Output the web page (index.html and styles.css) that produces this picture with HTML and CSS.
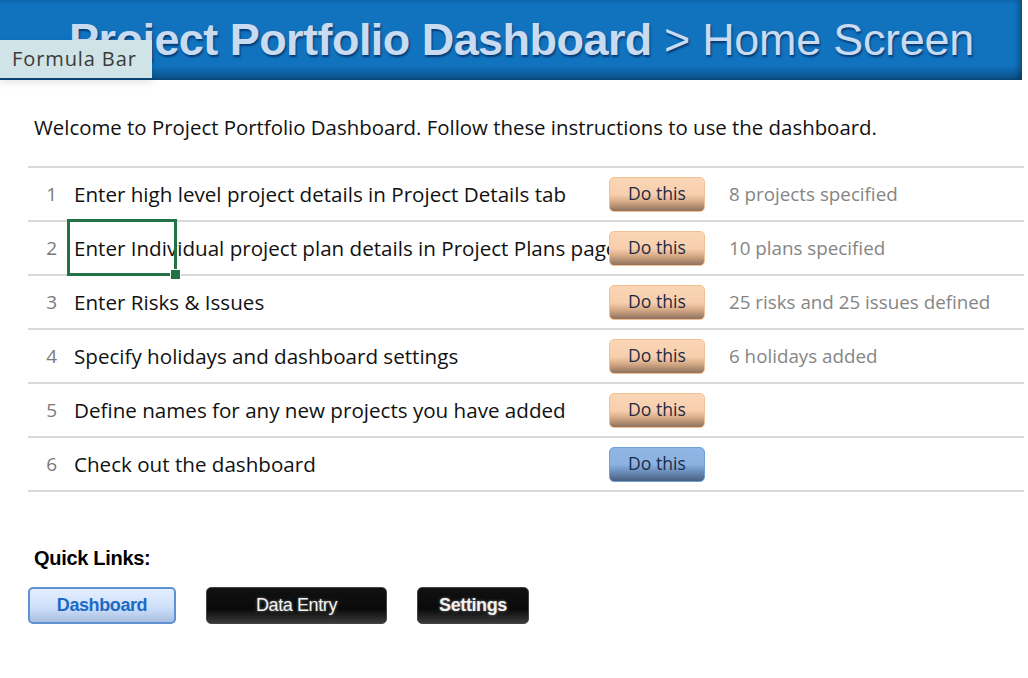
FILE: index.html
```html
<!DOCTYPE html>
<html>
<head>
<meta charset="utf-8">
<link rel="stylesheet" href="styles.css">
</head>
<body>
<div class="page">
  <header class="banner">
    <h1 class="title"><b>Project Portfolio Dashboard</b> &gt; Home Screen</h1>
  </header>
  <div class="tooltip">Formula Bar</div>

  <p class="welcome">Welcome to Project Portfolio Dashboard. Follow these instructions to use the dashboard.</p>

  <div class="steps">
    <div class="row">
      <span class="num">1</span>
      <span class="text">Enter high level project details in Project Details tab</span>
      <span class="btn peach">Do this</span>
      <span class="status">8 projects specified</span>
    </div>
    <div class="row">
      <span class="num">2</span>
      <span class="text">Enter Individual project plan details in Project Plans page</span>
      <span class="btn peach">Do this</span>
      <span class="status">10 plans specified</span>
      <span class="selection"><i class="handle"></i></span>
    </div>
    <div class="row">
      <span class="num">3</span>
      <span class="text">Enter Risks &amp; Issues</span>
      <span class="btn peach">Do this</span>
      <span class="status">25 risks and 25 issues defined</span>
    </div>
    <div class="row">
      <span class="num">4</span>
      <span class="text">Specify holidays and dashboard settings</span>
      <span class="btn peach">Do this</span>
      <span class="status">6 holidays added</span>
    </div>
    <div class="row">
      <span class="num">5</span>
      <span class="text">Define names for any new projects you have added</span>
      <span class="btn peach">Do this</span>
      <span class="status"></span>
    </div>
    <div class="row">
      <span class="num">6</span>
      <span class="text">Check out the dashboard</span>
      <span class="btn blue">Do this</span>
      <span class="status"></span>
    </div>
  </div>

  <h2 class="quick">Quick Links:</h2>
  <div class="links">
    <span class="link light">Dashboard</span>
    <span class="link dark entry">Data Entry</span>
    <span class="link dark settings">Settings</span>
  </div>
</div>
</body>
</html>
```

FILE: styles.css
```css
html, body {
  margin: 0;
  padding: 0;
  background: #ffffff;
}

.page {
  position: relative;
  width: 1028px;
  height: 678px;
  overflow: hidden;
  font-family: "Open Sans", "Liberation Sans", Arial, sans-serif;
}

.banner {
  width: 1022px;
  height: 80px;
  background: linear-gradient(to bottom, #1172be 0px, #1172be 66px, #0e62a4 72px, #0a4f86 80px);
  display: flex;
  align-items: center;
  justify-content: flex-end;
  padding-right: 48px;
  box-sizing: border-box;
  box-shadow: inset -4px 0 4px rgba(0,0,0,0.25);
}

.title {
  margin: 0;
  font-family: "Liberation Sans", Arial, sans-serif;
  font-weight: normal;
  font-size: 45px;
  color: #c9dbf1;
  letter-spacing: -0.3px;
  text-shadow: 1px 2px 2px rgba(0,20,60,0.6);
  white-space: nowrap;
  line-height: 1;
  padding-bottom: 2px;
}

.title b {
  font-weight: bold;
  letter-spacing: -0.55px;
}

.tooltip {
  position: absolute;
  left: 0;
  top: 40px;
  width: 152px;
  height: 38px;
  background: #d0e4e7;
  color: #3a3a3a;
  font-family: "Open Sans", "Liberation Sans", sans-serif;
  font-size: 20px;
  letter-spacing: 0.9px;
  line-height: 38px;
  padding-left: 12px;
  box-sizing: border-box;
  box-shadow: 0 4px 8px rgba(0,0,0,0.12);
}

.welcome {
  margin: 0;
  padding: 35px 0 0 34px;
  font-size: 20.4px;
  color: #111;
  line-height: 24px;
}

.steps {
  margin: 27px 4px 0 28px;
  border-top: 2px solid #d9d9d9;
}

.row {
  position: relative;
  height: 52px;
  border-bottom: 2px solid #d9d9d9;
  display: grid;
  grid-template-columns: 29px 552px 96px 1fr;
  align-items: center;
}

.num {
  text-align: right;
  color: #7a7a7a;
  font-size: 19px;
}

.text {
  padding-left: 17px;
  font-size: 20.6px;
  color: #111;
  white-space: nowrap;
  overflow: hidden;
}

.btn {
  height: 35px;
  box-sizing: border-box;
  border-radius: 5px;
  display: flex;
  align-items: center;
  justify-content: center;
  font-size: 17.6px;
  color: #1c2a44;
  padding-bottom: 3px;
}

.btn.peach {
  border: 1px solid #f5bf94;
  background: linear-gradient(to bottom, #fad5b6 0%, #f8cfad 50%, #d6aa86 72%, #8d715e 100%);
}

.btn.blue {
  border: 1px solid #6f9fd8;
  background: linear-gradient(to bottom, #8fb6e4 0%, #8ab1e0 50%, #6b8dbb 72%, #4a5f7e 100%);
}

.status {
  padding-left: 24px;
  color: #858585;
  font-size: 18.8px;
  white-space: nowrap;
}

.selection {
  position: absolute;
  left: 39px;
  top: -3px;
  width: 110px;
  height: 57px;
  border: 3px solid #217346;
  box-sizing: border-box;
}

.handle {
  position: absolute;
  right: -7px;
  bottom: -7px;
  width: 9px;
  height: 9px;
  background: #217346;
  border: 1px solid #fff;
}

.quick {
  margin: 0;
  padding: 55px 0 0 34px;
  font-family: "Liberation Sans", Arial, sans-serif;
  font-size: 20px;
  font-weight: bold;
  color: #000;
  letter-spacing: -0.3px;
  line-height: 22px;
}

.links {
  display: flex;
  gap: 30px;
  margin: 18px 0 0 28px;
}

.link {
  height: 37px;
  box-sizing: border-box;
  border-radius: 5px;
  display: flex;
  align-items: center;
  justify-content: center;
  font-family: "Liberation Sans", Arial, sans-serif;
  font-size: 18px;
  letter-spacing: -0.4px;
}

.link.light {
  width: 148px;
  border: 2px solid #5f92d2;
  background: linear-gradient(to bottom, #e4efff 0%, #cfe0fb 55%, #a9bfe0 100%);
  color: #1d6ac4;
  font-weight: bold;
}

.link.dark {
  border: 1px solid #444;
  background: linear-gradient(to bottom, #111 0%, #0a0a0a 60%, #3a3a3a 100%);
  color: #f2f2f2;
  text-shadow: 0 0 3px rgba(255,255,255,0.45);
}

.link.entry {
  width: 181px;
}

.link.settings {
  width: 112px;
  font-weight: bold;
}
```
